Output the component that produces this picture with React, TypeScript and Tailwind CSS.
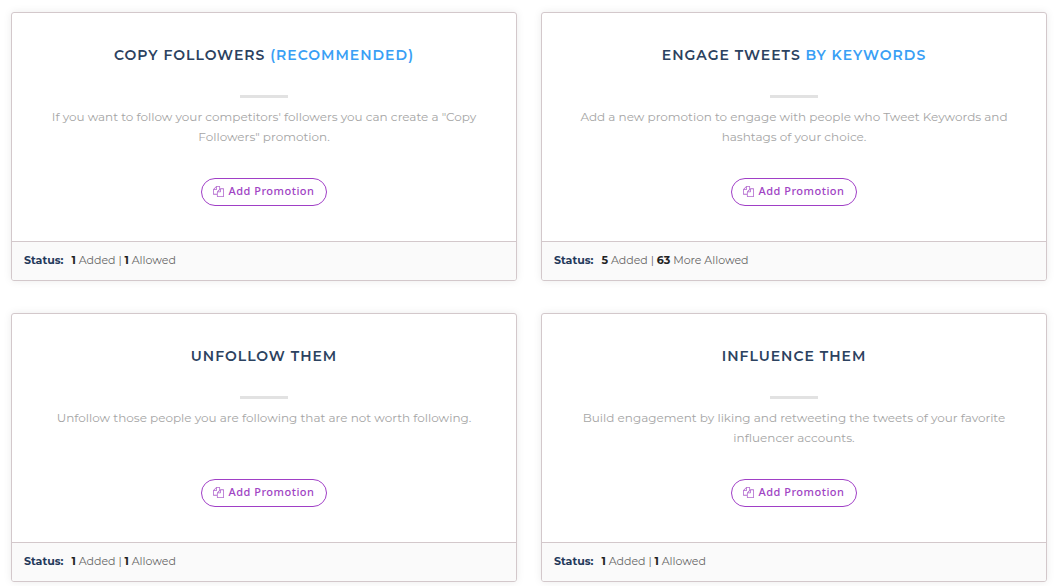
type Promotion = {
  title: string;
  accent?: string;
  text: string;
  added: number;
  allowed: number;
  allowedLabel: string;
};

const promotions: Promotion[] = [
  {
    title: 'Copy Followers',
    accent: '(Recommended)',
    text: 'If you want to follow your competitors\' followers you can create a "Copy Followers" promotion.',
    added: 1,
    allowed: 1,
    allowedLabel: 'Allowed',
  },
  {
    title: 'Engage Tweets',
    accent: 'By Keywords',
    text: 'Add a new promotion to engage with people who Tweet Keywords and hashtags of your choice.',
    added: 5,
    allowed: 63,
    allowedLabel: 'More Allowed',
  },
  {
    title: 'Unfollow Them',
    text: 'Unfollow those people you are following that are not worth following.',
    added: 1,
    allowed: 1,
    allowedLabel: 'Allowed',
  },
  {
    title: 'Influence Them',
    text: 'Build engagement by liking and retweeting the tweets of your favorite influencer accounts.',
    added: 1,
    allowed: 1,
    allowedLabel: 'Allowed',
  },
];

function CopyIcon() {
  return (
    <svg viewBox="0 0 1792 1792" className="size-[11px] fill-current opacity-80" aria-hidden="true">
      <path d="M1696 384q40 0 68 28t28 68v1216q0 40-28 68t-68 28h-960q-40 0-68-28t-28-68v-288h-544q-40 0-68-28t-28-68v-672q0-40 20-88t48-76l408-408q28-28 76-48t88-20h416q40 0 68 28t28 68v328q68-40 128-40h416zm-544 213l-299 299h299v-299zm-640-384l-299 299h299v-299zm196 647l316-316v-416h-384v416q0 40-28 68t-68 28h-416v640h512v-256q0-40 20-88t48-76zm956 804v-1152h-384v416q0 40-28 68t-68 28h-416v640h896z" />
    </svg>
  );
}

function PromotionCard({ promotion }: { promotion: Promotion }) {
  const { title, accent, text, added, allowed, allowedLabel } = promotion;
  return (
    <section className="flex flex-col overflow-hidden rounded-[3px] border border-[#d3c8cb] bg-white shadow-[0_0_8px_rgba(0,0,0,0.08)]">
      <div className="flex grow flex-col items-center px-8 pt-8 pb-[35px] text-center">
        <h2 className="text-[14px] leading-5 font-semibold tracking-[1px] text-[#2c4260] uppercase">
          {title}
          {accent && <span className="text-[#3a9ff5]"> {accent}</span>}
        </h2>
        <div className="mt-[30px] h-[3px] w-12 bg-[#e2e2e2]" />
        <p className="mt-[9px] min-h-10 text-[12px] leading-5 text-[#a5a5a5]">{text}</p>
        <button
          type="button"
          className="mt-[31px] flex h-7 items-center justify-center gap-1 rounded-full border border-[#a03fc6] px-[11px] pb-px font-['Noto_Sans',sans-serif] text-[11px] font-medium tracking-[0.5px] text-[#a044c4]"
        >
          <CopyIcon />
          Add Promotion
        </button>
      </div>
      <footer className="border-t border-[#d3c8cb] bg-[#fafafa] px-3 pt-2 pb-[10px] text-[11px] leading-5 text-[#666]">
        <strong className="mr-2 font-bold text-[#24395a]">Status:</strong>
        <b className="font-bold text-[#222]">{added}</b> Added | <b className="font-bold text-[#222]">{allowed}</b>{' '}
        {allowedLabel}
      </footer>
    </section>
  );
}

export default function App() {
  return (
    <main className="grid grid-cols-2 gap-x-6 gap-y-8 bg-white py-3 pr-3 pl-[11px] font-[Montserrat,Inter,sans-serif]">
      {promotions.map((promotion) => (
        <PromotionCard key={promotion.title} promotion={promotion} />
      ))}
    </main>
  );
}
